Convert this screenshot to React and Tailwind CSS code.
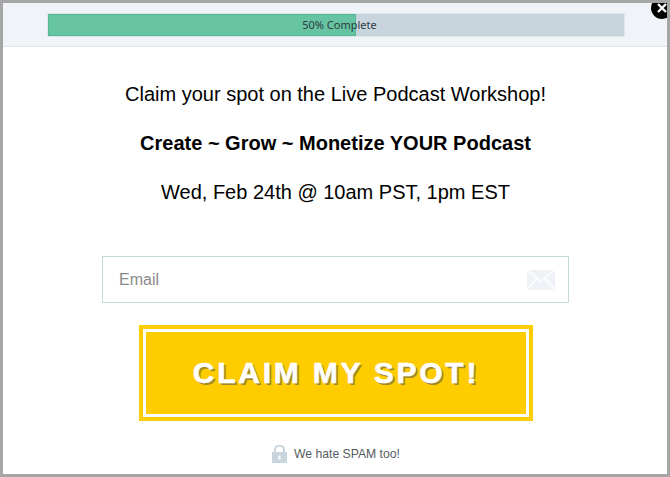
import React from 'react';

function MailIcon() {
  return (
    <svg width="28" height="20" viewBox="0 0 28 20" className="absolute right-[13px] top-[13px]">
      <rect width="28" height="20" fill="#eff3f7" />
      <path d="M0 0 L14 11 L28 0 M0 20 L10 8 M28 20 L18 8" fill="none" stroke="#ffffff" strokeWidth="1.2" />
    </svg>
  );
}

function LockIcon() {
  return (
    <svg width="15" height="18" viewBox="0 0 15 18">
      <path d="M3 8 V5 a4.5 4.5 0 0 1 9 0 V8" fill="none" stroke="#c9d5dd" strokeWidth="2" />
      <rect y="7" width="15" height="11" fill="#c9d5dd" />
      <rect x="6.5" y="10.5" width="2" height="4" fill="#ffffff" />
    </svg>
  );
}

export default function App() {
  return (
    <div className="w-[670px] h-[477px] bg-[#a6a6a6] pt-[3px] pl-[3px] pr-[3px] pb-[3px] font-['Liberation_Sans',Arial,sans-serif]">
      <div className="relative w-full h-full bg-white overflow-hidden">
        <div className="h-[44px] bg-[#f0f4f8] border-b border-[#dfe7ec] pt-[10px] pl-[44px]">
          <div className="relative w-[578px] h-[24px] bg-[#c9d5dd] border border-[#dfe7ec]">
            <div className="h-full w-[308px] bg-[#66c4a3] border border-[#52b892]" />
            <div className="absolute inset-0 flex items-center justify-center pl-[7px] text-[11px] text-[#2f3b42] font-['Noto_Sans',sans-serif]">
              50% Complete
            </div>
          </div>
        </div>

        <button className="absolute right-[-6px] top-[-6px] w-[22px] h-[22px] rounded-full bg-black flex items-center justify-center">
          <svg width="10" height="10" viewBox="0 0 10 10">
            <path d="M1 1 L9 9 M9 1 L1 9" stroke="#ffffff" strokeWidth="2.4" />
          </svg>
        </button>

        <div className="flex flex-col items-center pl-[1px] text-[20px] leading-[24px] text-black">
          <p className="mt-[35px]">Claim your spot on the Live Podcast Workshop!</p>
          <p className="mt-[25px] font-bold">Create ~ Grow ~ Monetize YOUR Podcast</p>
          <p className="mt-[25px]">Wed, Feb 24th @ 10am PST, 1pm EST</p>
        </div>

        <div className="relative mt-[52px] ml-[99px] w-[467px] h-[47px] border border-[#c9d9de] flex items-center pl-[16px] text-[16px] text-[#8a8a8a]">
          Email
          <MailIcon />
        </div>

        <button className="block mt-[22px] ml-[136px] w-[394px] h-[96px] bg-[#ffcc00] p-[4px]">
          <span className="flex items-center justify-center w-full h-full pb-[2px] border-[3px] border-white text-white font-bold text-[30px] tracking-[2.75px] [-webkit-text-stroke:0.6px_white] [text-shadow:2px_2px_0_#a08a30]">
            CLAIM MY SPOT!
          </span>
        </button>

        <div className="mt-[24px] flex items-center justify-center gap-[7px] pl-[2px] text-[12.2px] text-[#555b60]">
          <LockIcon />
          <span>We hate SPAM too!</span>
        </div>
      </div>
    </div>
  );
}
